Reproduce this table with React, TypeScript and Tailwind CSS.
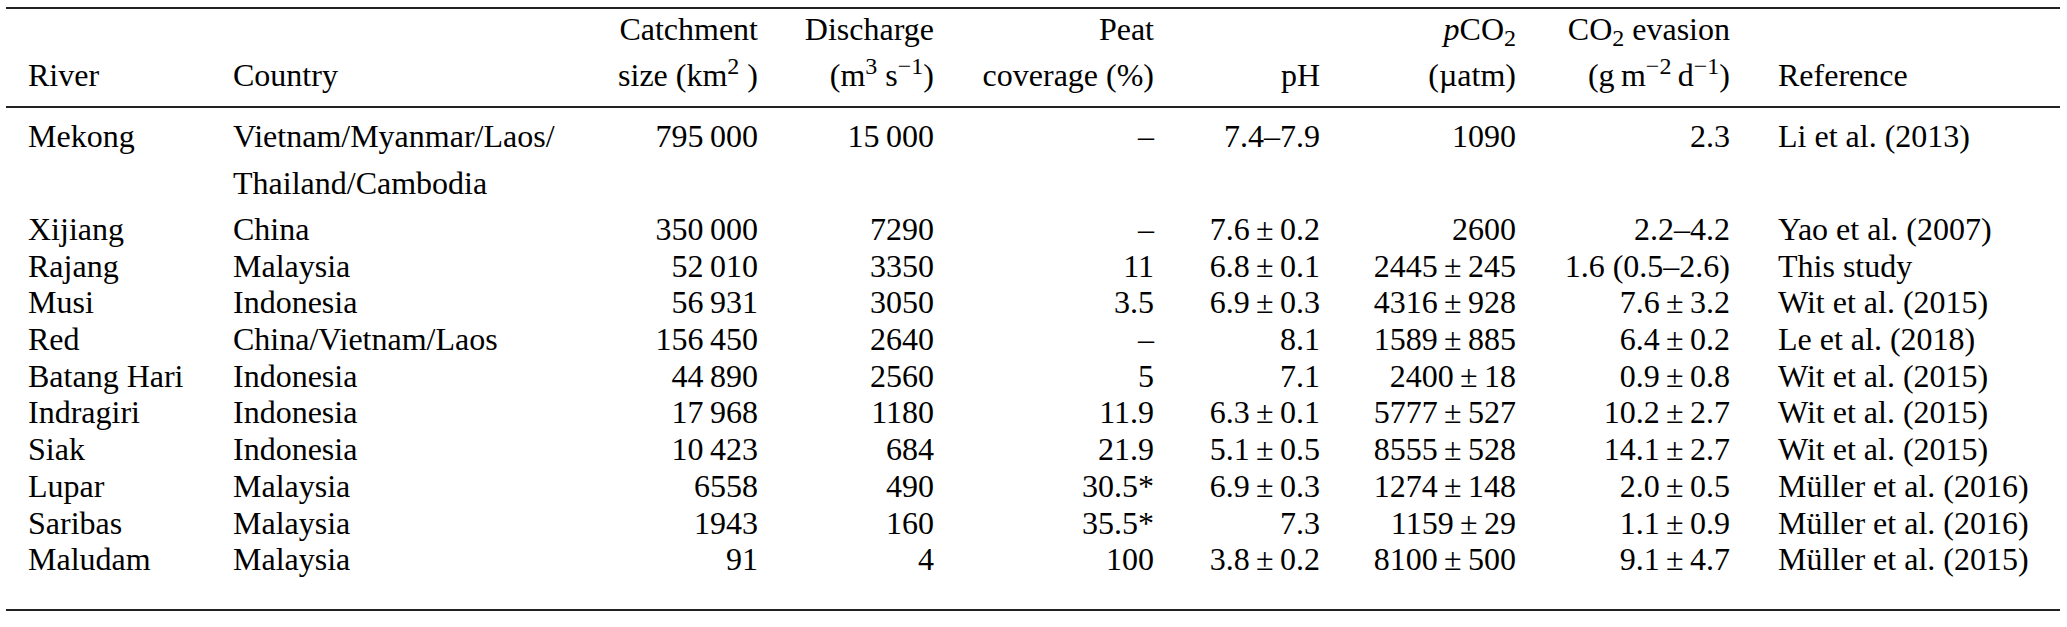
import React from "react";

type Row = {
  river: string;
  country: React.ReactNode;
  catchment: string;
  discharge: string;
  peat: string;
  ph: React.ReactNode;
  pco2: React.ReactNode;
  evasion: React.ReactNode;
  reference: string;
  extra?: string;
};

const cols = "grid grid-cols-[227px_357px_168px_176px_220px_166px_196px_214px_1fr] font-[Liberation_Serif]";

function Pm({ a, b }: { a: string; b: string }) {
  return (
    <span>
      {a}
      <span className="mx-[0.2em]">±</span>
      {b}
    </span>
  );
}

// two-line header cell, right aligned
function Head2({ top, bottom }: { top: React.ReactNode; bottom: React.ReactNode }) {
  return (
    <div className="text-right">
      <div>{top}</div>
      <div className="mt-[9px]">{bottom}</div>
    </div>
  );
}

const rows: Row[] = [
  {
    river: "Mekong",
    country: (
      <>
        <div>Vietnam/Myanmar/Laos/</div>
        <div className="mt-[11px]">Thailand/Cambodia</div>
      </>
    ),
    catchment: "795\u2009000",
    discharge: "15\u2009000",
    peat: "–",
    ph: "7.4–7.9",
    pco2: "1090",
    evasion: "2.3",
    reference: "Li et al. (2013)",
    extra: "pb-[9px]",
  },
  { river: "Xijiang", country: "China", catchment: "350\u2009000", discharge: "7290", peat: "–", ph: <Pm a="7.6" b="0.2" />, pco2: "2600", evasion: "2.2–4.2", reference: "Yao et al. (2007)" },
  { river: "Rajang", country: "Malaysia", catchment: "52\u2009010", discharge: "3350", peat: "11", ph: <Pm a="6.8" b="0.1" />, pco2: <Pm a="2445" b="245" />, evasion: "1.6 (0.5–2.6)", reference: "This study" },
  { river: "Musi", country: "Indonesia", catchment: "56\u2009931", discharge: "3050", peat: "3.5", ph: <Pm a="6.9" b="0.3" />, pco2: <Pm a="4316" b="928" />, evasion: <Pm a="7.6" b="3.2" />, reference: "Wit et al. (2015)" },
  { river: "Red", country: "China/Vietnam/Laos", catchment: "156\u2009450", discharge: "2640", peat: "–", ph: "8.1", pco2: <Pm a="1589" b="885" />, evasion: <Pm a="6.4" b="0.2" />, reference: "Le et al. (2018)" },
  { river: "Batang Hari", country: "Indonesia", catchment: "44\u2009890", discharge: "2560", peat: "5", ph: "7.1", pco2: <Pm a="2400" b="18" />, evasion: <Pm a="0.9" b="0.8" />, reference: "Wit et al. (2015)" },
  { river: "Indragiri", country: "Indonesia", catchment: "17\u2009968", discharge: "1180", peat: "11.9", ph: <Pm a="6.3" b="0.1" />, pco2: <Pm a="5777" b="527" />, evasion: <Pm a="10.2" b="2.7" />, reference: "Wit et al. (2015)" },
  { river: "Siak", country: "Indonesia", catchment: "10\u2009423", discharge: "684", peat: "21.9", ph: <Pm a="5.1" b="0.5" />, pco2: <Pm a="8555" b="528" />, evasion: <Pm a="14.1" b="2.7" />, reference: "Wit et al. (2015)" },
  { river: "Lupar", country: "Malaysia", catchment: "6558", discharge: "490", peat: "30.5*", ph: <Pm a="6.9" b="0.3" />, pco2: <Pm a="1274" b="148" />, evasion: <Pm a="2.0" b="0.5" />, reference: "Müller et al. (2016)" },
  { river: "Saribas", country: "Malaysia", catchment: "1943", discharge: "160", peat: "35.5*", ph: "7.3", pco2: <Pm a="1159" b="29" />, evasion: <Pm a="1.1" b="0.9" />, reference: "Müller et al. (2016)" },
  { river: "Maludam", country: "Malaysia", catchment: "91", discharge: "4", peat: "100", ph: <Pm a="3.8" b="0.2" />, pco2: <Pm a="8100" b="500" />, evasion: <Pm a="9.1" b="4.7" />, reference: "Müller et al. (2015)" },
];

export default function App() {
  return (
    <div className="font-['Liberation_Serif'] w-[2067px] h-[627px] bg-white text-black text-[32px] leading-[36.7px]">
      <div className="ml-[6px] w-[2054px] pt-[7px]">
        <div className="h-[2px] bg-[#222]" />

        <div className={`${cols} pt-[2px] pb-[12px] leading-[37px]`}>
          <div className="self-end pl-[22px]">River</div>
          <div className="self-end">Country</div>
          <Head2
            top="Catchment"
            bottom={
              <>
                size (km<sup>2</sup> )
              </>
            }
          />
          <Head2
            top="Discharge"
            bottom={
              <>
                (m<sup>3</sup> s<sup>−1</sup>)
              </>
            }
          />
          <Head2 top="Peat" bottom="coverage (%)" />
          <div className="self-end text-right">pH</div>
          <Head2
            top={
              <>
                <i>p</i>CO<sub>2</sub>
              </>
            }
            bottom="(µatm)"
          />
          <Head2
            top={
              <>
                CO<sub>2</sub> evasion
              </>
            }
            bottom={
              <>
                (g{"\u2009"}m<sup>−2</sup>{"\u2009"}d<sup>−1</sup>)
              </>
            }
          />
          <div className="self-end pl-[48px]">Reference</div>
        </div>

        <div className="h-[1.5px] bg-[#222]" />

        <div className="pt-[10px] pb-[31px]">
          {rows.map((r) => (
            <div key={r.river} className={`${cols} ${r.extra ?? ""}`}>
              <div className="pl-[22px]">{r.river}</div>
              <div>{r.country}</div>
              <div className="text-right">{r.catchment}</div>
              <div className="text-right">{r.discharge}</div>
              <div className="text-right">{r.peat}</div>
              <div className="text-right">{r.ph}</div>
              <div className="text-right">{r.pco2}</div>
              <div className="text-right">{r.evasion}</div>
              <div className="pl-[48px]">{r.reference}</div>
            </div>
          ))}
        </div>

        <div className="h-[2px] bg-[#222]" />
      </div>
    </div>
  );
}
